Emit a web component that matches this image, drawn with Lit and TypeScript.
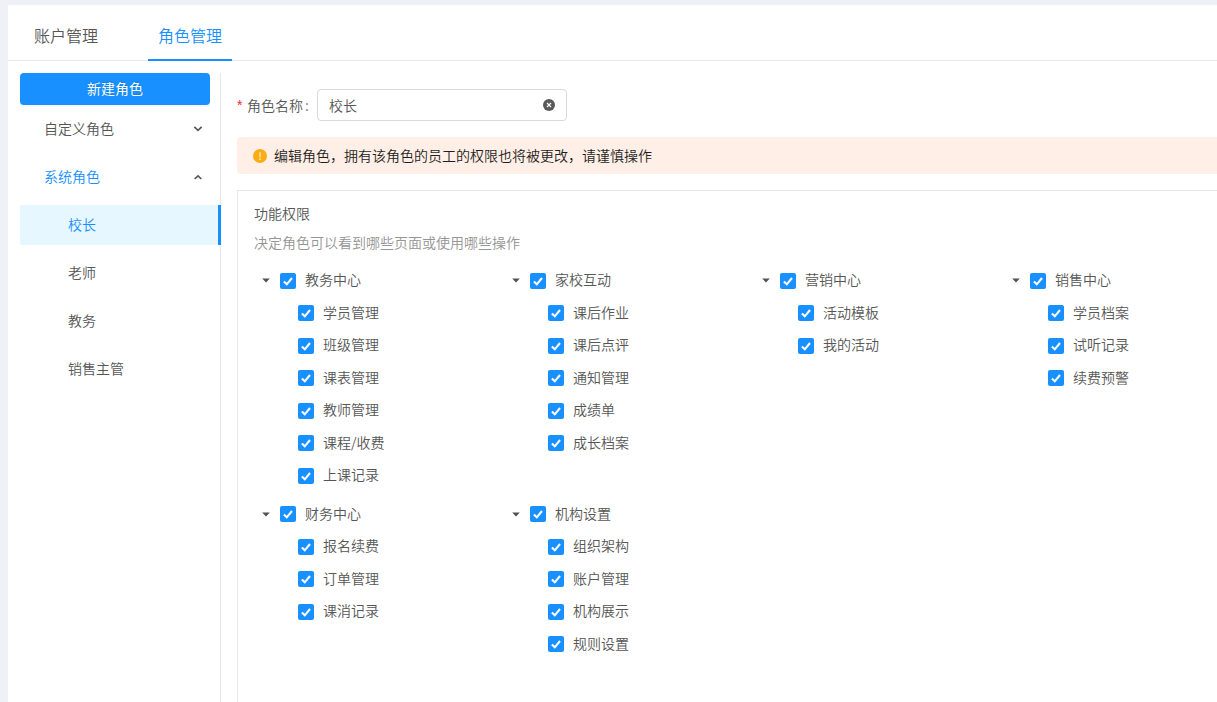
import { LitElement, html, css, svg } from "lit";
import { customElement, property, state } from "lit/decorators.js";
import { classMap } from "lit/directives/class-map.js";

interface Group {
  name: string;
  children: string[];
}

const GROUP_ROWS: Group[][] = [
  [
    { name: "教务中心", children: ["学员管理", "班级管理", "课表管理", "教师管理", "课程/收费", "上课记录"] },
    { name: "家校互动", children: ["课后作业", "课后点评", "通知管理", "成绩单", "成长档案"] },
    { name: "营销中心", children: ["活动模板", "我的活动"] },
    { name: "销售中心", children: ["学员档案", "试听记录", "续费预警"] },
  ],
  [
    { name: "财务中心", children: ["报名续费", "订单管理", "课消记录"] },
    { name: "机构设置", children: ["组织架构", "账户管理", "机构展示", "规则设置"] },
  ],
];

const chevron = (up: boolean) => html`<svg width="10" height="10" viewBox="0 0 10 10" fill="none" stroke="#595959" stroke-width="1.7">
  ${up ? svg`<path d="M1.6 7 5 3.8 8.4 7" />` : svg`<path d="M1.3 2.8 5 6.4 8.7 2.8" />`}
</svg>`;

@customElement("permission-tree")
export class PermissionTree extends LitElement {
  @property({ attribute: false }) group!: Group;

  static styles = css`
    :host {
      display: block;
      width: 250px;
      flex: none;
    }
    .row {
      display: flex;
      align-items: center;
      height: 32.5px;
      line-height: 22px;
    }
    .child {
      padding-left: 44px;
    }
    .caret {
      width: 24px;
      height: 16px;
      margin-right: 2px;
      display: flex;
      align-items: center;
      justify-content: center;
    }
    .box {
      width: 16px;
      height: 16px;
      border-radius: 2px;
      background: #1890ff;
      margin-right: 9px;
      flex: none;
    }
    svg {
      display: block;
    }
    .label {
      padding-bottom: 3px;
    }
  `;

  private box() {
    return html`<span class="box"
      ><svg width="16" height="16" viewBox="0 0 16 16" fill="none" stroke="#fff" stroke-width="2.1">
        <path d="M3.9 8.4 6.8 11.3 12 5" /></svg
    ></span>`;
  }

  render() {
    return html`
      <div class="row">
        <span class="caret"><svg width="8" height="5" viewBox="0 0 8 5"><path d="M0.2 0.5H7.8L4 4.6Z" fill="#525252" /></svg></span>
        ${this.box()}<span class="label">${this.group.name}</span>
      </div>
      ${this.group.children.map((c) => html`<div class="row child">${this.box()}<span class="label">${c}</span></div>`)}
    `;
  }
}

@customElement("app-root")
export class AppRoot extends LitElement {
  @state() private selected = "校长";

  static styles = css`
    :host {
      display: block;
      height: 702px;
      box-sizing: border-box;
      padding: 5px 0 0 8px;
      overflow: hidden;
      background: #f0f1f6;
      color: #565656;
      font: 350 14px/22px "Noto Sans CJK SC", sans-serif;
    }
    * {
      box-sizing: border-box;
    }
    svg {
      display: block;
      flex: none;
    }
    .page {
      height: 697px;
      background: #fff;
      display: flex;
      flex-direction: column;
    }
    .tabs {
      display: flex;
      gap: 40px;
      height: 56px;
      padding-left: 16px;
      border-bottom: 1px solid #e8e8e8;
      font-size: 16px;
      line-height: 24px;
      flex: none;
    }
    .tab {
      width: 84px;
      height: 56px;
      padding-top: 18px;
      text-align: center;
      border-bottom: 2px solid transparent;
    }
    .tab.active {
      color: #1890ff;
      border-color: #1890ff;
    }
    .body {
      flex: 1;
      display: flex;
      padding: 12px 0 0 12px;
      min-height: 0;
    }
    .side {
      width: 201px;
      flex: none;
      border-right: 1px solid #e8e8e8;
    }
    .create {
      display: block;
      width: 190px;
      height: 32px;
      padding: 0 0 2px;
      border: 0;
      border-radius: 4px;
      background: #1890ff;
      color: #fff;
      font: inherit;
      font-weight: 400;
      line-height: 30px;
      box-shadow: 0 2px 0 rgba(0, 0, 0, 0.03);
      text-shadow: 0 -1px 0 rgba(0, 0, 0, 0.12);
    }
    .menu {
      display: flex;
      flex-direction: column;
      gap: 8px;
      padding-top: 4px;
    }
    .item {
      height: 40px;
      line-height: 38px;
      padding: 0 18px 0 24px;
      display: flex;
      align-items: center;
      justify-content: space-between;
      margin-right: -1px;
    }
    .item span {
      padding-bottom: 2px;
    }
    .item.sub {
      padding-left: 48px;
    }
    .blue {
      color: #1890ff;
    }
    .item.selected {
      color: #1890ff;
      background: #e6f7ff;
      border-right: 3px solid #1890ff;
    }
    .main {
      flex: 1;
      min-width: 0;
      padding: 16px 0 0 16px;
      display: flex;
      flex-direction: column;
    }
    .field {
      display: flex;
      align-items: center;
      height: 32px;
      flex: none;
    }
    .star {
      width: 10px;
      color: #f5222d;
      font: 14px/14px "Liberation Sans", sans-serif;
    }
    .colon {
      width: 14px;
      padding-left: 2px;
    }
    .input {
      width: 250px;
      height: 32px;
      border: 1px solid #d9d9d9;
      border-radius: 4px;
      padding: 0 11px;
      display: flex;
      align-items: center;
      justify-content: space-between;
    }
    .alert {
      height: 37px;
      margin-top: 16px;
      border-radius: 4px 0 0 4px;
      background: #ffefe6;
      color: #1f1f1f;
      display: flex;
      align-items: center;
      gap: 7px;
      padding-left: 16px;
      flex: none;
    }
    .alert span {
      padding-bottom: 2px;
    }
    .panel {
      flex: 1;
      min-height: 0;
      margin-top: 16px;
      border: 1px solid #e8e8e8;
      border-width: 1px 0 0 1px;
      padding: 11px 0 0 16px;
    }
    .hint {
      color: #959595;
      margin-top: 7px;
    }
    .trees {
      padding-top: 11.65px;
      display: flex;
      flex-direction: column;
      gap: 6px;
    }
    .line {
      display: flex;
    }
  `;

  render() {
    return html`<div class="page">
      <nav class="tabs">
        <div class="tab">账户管理</div>
        <div class="tab active">角色管理</div>
      </nav>
      <div class="body">
        <aside class="side">
          <button class="create">新建角色</button>
          <div class="menu">
            <div class="item"><span>自定义角色</span>${chevron(false)}</div>
            <div class="item"><span class="blue">系统角色</span>${chevron(true)}</div>
            ${["校长", "老师", "教务", "销售主管"].map(
              (name) => html`<div
                class=${classMap({ item: true, sub: true, selected: name === this.selected })}
                @click=${() => (this.selected = name)}
              >
                <span>${name}</span>
              </div>`
            )}
          </div>
        </aside>
        <main class="main">
          <div class="field">
            <span class="star">*</span><span>角色名称</span><span class="colon">:</span>
            <div class="input">
              <span>校长</span>
              <svg width="12" height="12" viewBox="0 0 12 12">
                <circle cx="6" cy="6" r="6" fill="#595959" />
                <path d="M4 4 8 8M8 4 4 8" stroke="#fff" stroke-width="1.2" />
              </svg>
            </div>
          </div>
          <div class="alert">
            <svg width="14" height="14" viewBox="0 0 14 14">
              <circle cx="7" cy="7" r="7" fill="#faad14" />
              <path d="M6.5 3.3h1v5h-1zM6.3 9.4h1.4v1.3H6.3z" fill="#fff" />
            </svg>
            <span>编辑角色，拥有该角色的员工的权限也将被更改，请谨慎操作</span>
          </div>
          <section class="panel">
            <div>功能权限</div>
            <div class="hint">决定角色可以看到哪些页面或使用哪些操作</div>
            <div class="trees">
              ${GROUP_ROWS.map(
                (row) => html`<div class="line">
                  ${row.map((g) => html`<permission-tree .group=${g}></permission-tree>`)}
                </div>`
              )}
            </div>
          </section>
        </main>
      </div>
    </div>`;
  }
}
